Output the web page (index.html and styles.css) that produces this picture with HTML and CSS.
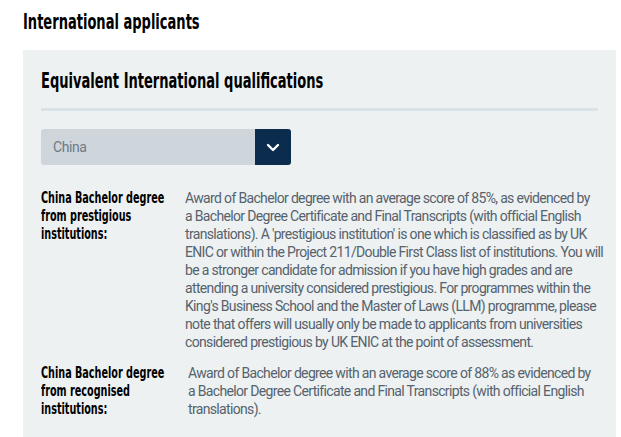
FILE: index.html
```html
<!DOCTYPE html>
<html lang="en">
<head>
    <meta charset="UTF-8">
    <meta name="viewport" content="width=device-width, initial-scale=1.0">
    <title>International applicants</title>
    <link rel="stylesheet" href="styles.css">
</head>
<body>
    <section class="applicants">
        <h2 class="applicants-title"><span class="narrow">International applicants</span></h2>

        <div class="panel">
            <h3 class="panel-title"><span class="narrow">Equivalent International qualifications</span></h3>

            <div class="country-select">
                <span class="country-value">China</span>
                <span class="country-button">
                    <svg width="14" height="9" viewBox="0 0 14 9"><path d="M2 2l5 5 5-5" fill="none" stroke="#fff" stroke-width="2.4" stroke-linecap="round" stroke-linejoin="round"/></svg>
                </span>
            </div>

            <div class="qual-row">
                <div class="qual-label"><div class="label-inner">China Bachelor degree from prestigious institutions:</div></div>
                <div class="qual-text">Award of Bachelor degree with an average score of 85%, as evidenced by<br>
                    a Bachelor Degree Certificate and Final Transcripts (with official English<br>
                    translations). A 'prestigious institution' is one which is classified as by UK<br>
                    ENIC or within the Project 211/Double First Class list of institutions. You will<br>
                    be a stronger candidate for admission if you have high grades and are<br>
                    attending a university considered prestigious. For programmes within the<br>
                    King's Business School and the Master of Laws (LLM) programme, please<br>
                    note that offers will usually only be made to applicants from universities<br>
                    considered prestigious by UK ENIC at the point of assessment.</div>
            </div>

            <div class="qual-row second">
                <div class="qual-label"><div class="label-inner">China Bachelor degree from recognised institutions:</div></div>
                <div class="qual-text">Award of Bachelor degree with an average score of 88% as evidenced by<br>
                    a Bachelor Degree Certificate and Final Transcripts (with official English<br>
                    translations).</div>
            </div>
        </div>
    </section>
</body>
</html>
```

FILE: styles.css
```css
/* Page base */
body {
    margin: 0;
    background: #fff;
    font-family: Roboto, "Liberation Sans", sans-serif;
    color: #56626c;
}
.applicants {
    padding: 10px 5px 0 23px;
}

/* Condensed bold headings */
.applicants-title,
.panel-title,
.qual-label {
    font-family: "DejaVu Sans Condensed", "DejaVu Sans", sans-serif;
    font-weight: bold;
    color: #000;
}
.narrow {
    display: inline-block;
    white-space: nowrap;
    transform: scaleX(0.69);
    transform-origin: left center;
}
.applicants-title {
    margin: 0 0 15px;
    font-size: 21px;
    line-height: 25px;
}
.panel {
    background: #edf1f2;
    padding: 19px 18px 24px 18px;
}
.panel-title {
    margin: 0;
    padding-bottom: 14px;
    border-bottom: 3px solid #d9e2e7;
    font-size: 21px;
    line-height: 25px;
}

/* Country dropdown */
.country-select {
    display: flex;
    width: 250px;
    height: 36px;
    margin-top: 18px;
    margin-bottom: 24px;
    background: #ced6dc;
    border-radius: 3px;
    overflow: hidden;
}
.country-value {
    flex: 1;
    padding-left: 12px;
    line-height: 36px;
    font-size: 14px;
    color: #6d7a84;
    letter-spacing: -0.4px;
}
.country-button {
    width: 36px;
    display: flex;
    align-items: center;
    justify-content: center;
    background: #0b2c4d;
}

/* Qualification rows */
.qual-row {
    display: flex;
    font-size: 14px;
    line-height: 18px;
}
.qual-row.second {
    margin-top: 13px;
}
.qual-label {
    width: 144px;
    flex: none;
    font-size: 15px;
}
.label-inner {
    width: 190px;
    transform: scaleX(0.715);
    transform-origin: left top;
}
.qual-text {
    flex: 1;
    white-space: nowrap;
    letter-spacing: -0.66px;
}
.qual-row.second .qual-text {
    padding-left: 3px;
}
```
